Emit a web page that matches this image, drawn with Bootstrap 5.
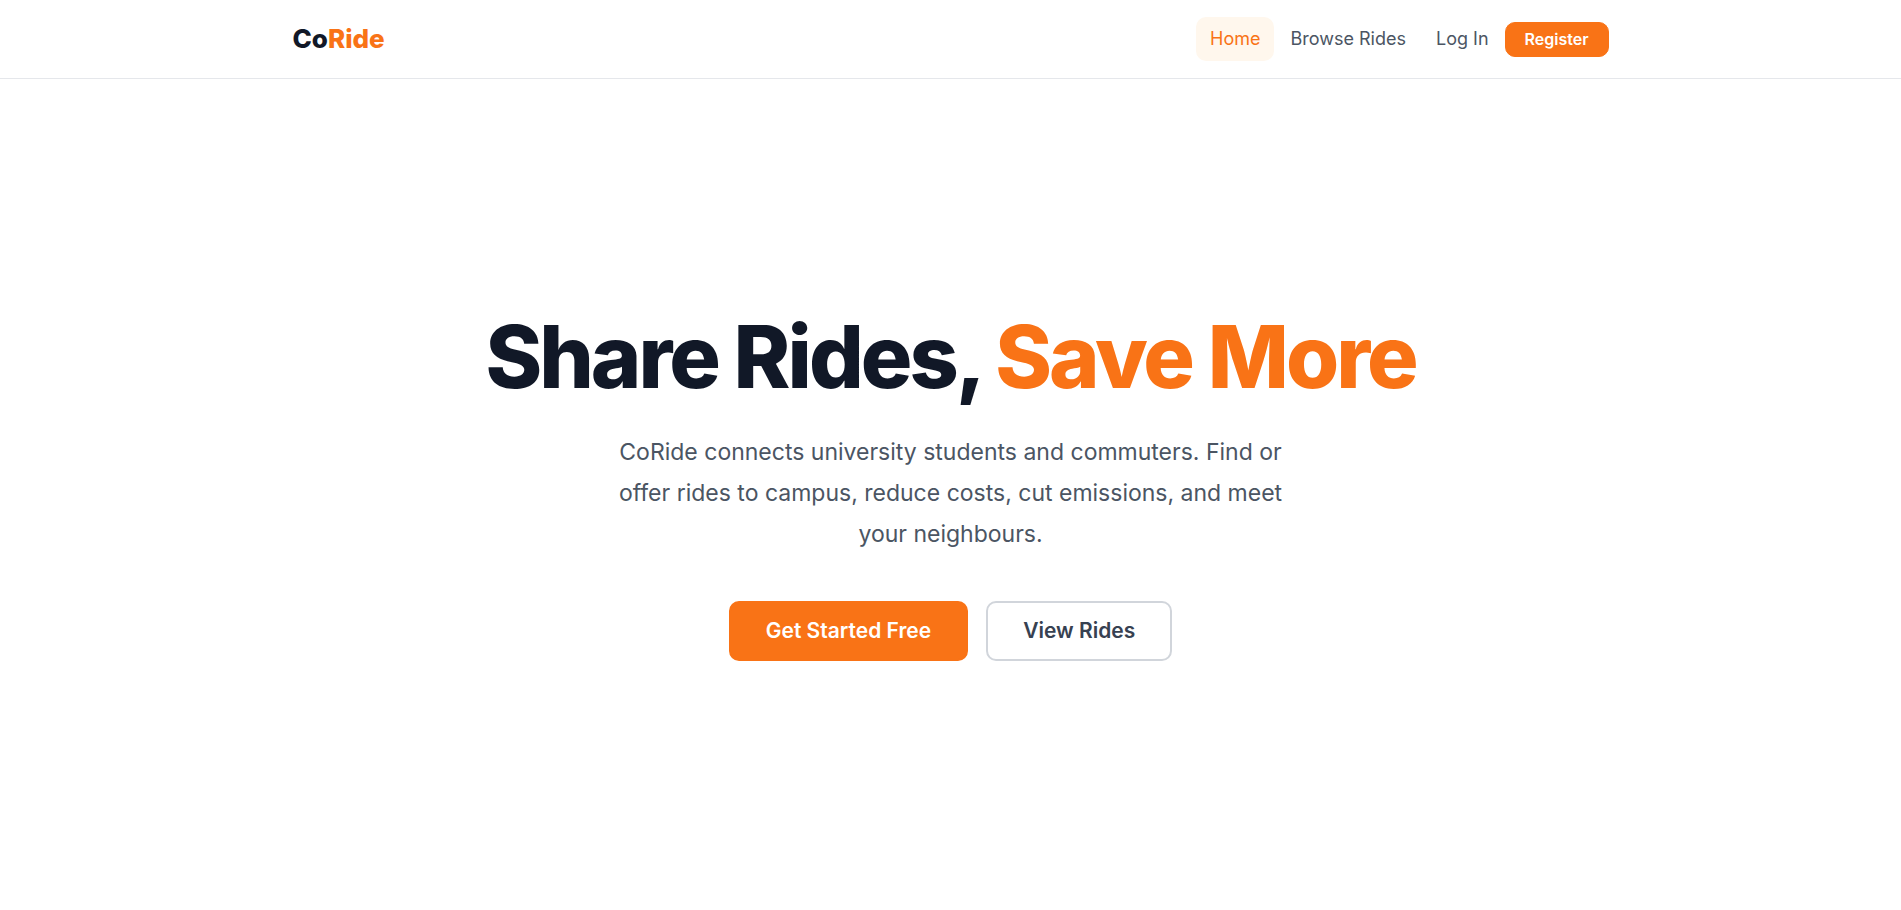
<!DOCTYPE html>
<html lang="en">
<head>
<meta charset="utf-8">
<meta name="viewport" content="width=device-width, initial-scale=1">
<title>CoRide</title>
<link rel="stylesheet" href="https://cdn.jsdelivr.net/npm/bootstrap@5.3.0/dist/css/bootstrap.min.css">
<style>
:root { --brand: #f97316; --ink: #111827; --slate: #4b5563; }
body { font-family: Inter, "Liberation Sans", sans-serif; color: var(--ink); background: #fff; }
.text-brand { color: var(--brand); }
.site-nav { border-bottom: 1px solid #e5e7eb; padding: 17px 0; }
.site-nav .navbar-brand { font-size: 26px; font-weight: 800; line-height: 40px; padding: 0; color: var(--ink); }
.site-nav .navbar-nav { gap: 2px; }
.site-nav .navbar-nav .nav-link { font-size: 18px; font-weight: 400; line-height: 28px; padding: 8px 14px; border-radius: 10px; color: var(--slate); }
.site-nav .navbar-nav .nav-link.active { color: var(--brand); background: #fff7ed; }
.btn-brand { --bs-btn-bg: #f97316; --bs-btn-border-color: #f97316; --bs-btn-color: #fff; --bs-btn-hover-bg: #ea580c; --bs-btn-hover-border-color: #ea580c; --bs-btn-hover-color: #fff; }
.btn-plain { --bs-btn-color: #374151; --bs-btn-border-color: #d1d5db; --bs-btn-hover-border-color: #f97316; --bs-btn-hover-color: #f97316; }
.btn-register { font-size: 16px; font-weight: 600; line-height: 23px; padding: 5px 19px; border-radius: 10px; }
.hero { padding-bottom: 20px; }
.hero-title { font-size: 86px; font-weight: 800; line-height: 96px; letter-spacing: -3px; margin-bottom: 27px; }
.hero-text { font-size: 23px; line-height: 41px; max-width: 704px; margin-bottom: 46px; color: var(--slate); }
.hero-actions { gap: 18px; }
.btn-hero { font-size: 21px; font-weight: 600; line-height: 32px; padding: 12px 35px; border-width: 2px; border-radius: 10px; }
@media (min-width: 1400px) { .site-container { max-width: 1340px; } }
</style>
</head>
<body class="d-flex flex-column min-vh-100">
<nav class="navbar navbar-expand-md site-nav">
  <div class="container site-container">
    <a class="navbar-brand" href="#">Co<span class="text-brand">Ride</span></a>
    <button class="navbar-toggler" type="button" data-bs-toggle="collapse" data-bs-target="#menu" aria-controls="menu" aria-label="Menu"><span class="navbar-toggler-icon"></span></button>
    <div class="collapse navbar-collapse justify-content-end" id="menu">
      <div class="navbar-nav align-items-md-center">
        <a class="nav-link active" href="#">Home</a>
        <a class="nav-link" href="#">Browse Rides</a>
        <a class="nav-link" href="#">Log In</a>
        <button class="btn btn-brand btn-register" type="button">Register</button>
      </div>
    </div>
  </div>
</nav>
<main class="container hero flex-grow-1 d-flex flex-column align-items-center justify-content-center text-center">
  <h1 class="hero-title">Share Rides, <span class="text-brand">Save More</span></h1>
  <p class="hero-text">CoRide connects university students and commuters. Find or offer rides to campus, reduce costs, cut emissions, and meet your neighbours.</p>
  <div class="hero-actions d-flex flex-wrap justify-content-center">
    <button class="btn btn-brand btn-hero" type="button">Get Started Free</button>
    <button class="btn btn-plain btn-hero" type="button">View Rides</button>
  </div>
</main>
<script src="https://cdn.jsdelivr.net/npm/bootstrap@5.3.0/dist/js/bootstrap.bundle.min.js"></script>
</body>
</html>
